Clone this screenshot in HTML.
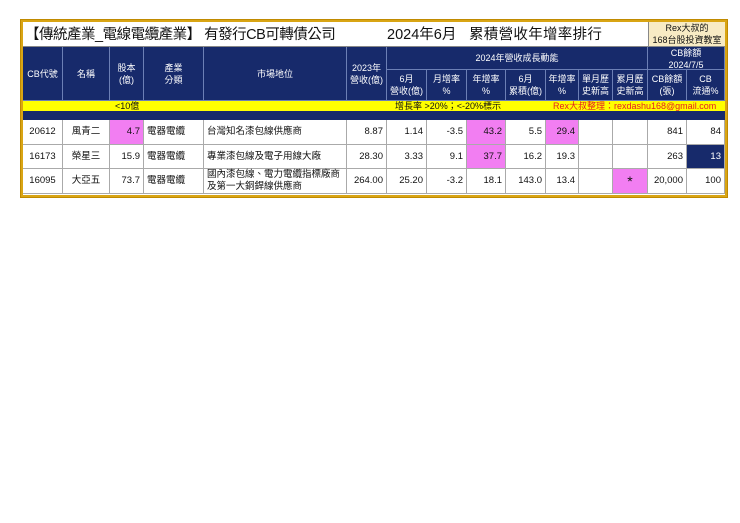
<!DOCTYPE html>
<html><head><meta charset="utf-8"><style>
*{margin:0;padding:0;box-sizing:border-box}
body{width:740px;height:523px;background:#fff;position:relative;font-family:"Liberation Sans","Noto Sans CJK TC",sans-serif;overflow:hidden}
.o{position:absolute;left:21px;top:20px;width:706px;height:177px;border:2px solid #d9a514;box-shadow:0 0 0 1px #c08a00}
.c{position:absolute;display:flex;align-items:center;justify-content:center;text-align:center;font-size:9.5px;line-height:12px;color:#111;white-space:nowrap}
.h{background:#172a6b;color:#fff;border-right:1px solid #6c7fb5;border-bottom:1px solid #6c7fb5;font-size:9px;line-height:12px}
.b{border-right:1px solid #aaa;border-bottom:1px solid #aaa}
.r{justify-content:flex-end;padding-right:3px}
.l{justify-content:flex-start;padding-left:3px;text-align:left}
.p{background:#f27ef2}
.n{background:#172a6b;color:#fff}
.t{position:absolute;top:23px;height:24px;line-height:24px;font-size:14.5px;color:#111;white-space:nowrap}
</style></head><body>
<div class="o"></div>
<div style="position:absolute;left:23px;top:46px;width:625px;height:1px;background:#888"></div>
<div class="t" style="left:25px;letter-spacing:-0.5px">【傳統產業_電線電纜產業】 有發行CB可轉債公司</div>
<div class="t" style="left:387px">2024年6月</div>
<div class="t" style="left:469px;letter-spacing:0.3px">累積營收年增率排行</div>
<div class="c" style="left:648px;top:22px;width:77px;height:25px;background:#f8ebc4;font-size:9px;border-left:1px solid #888;border-bottom:1px solid #888">Rex大叔的<br>168台股投資教室</div>

<div class="c h" style="left:23px;top:47px;width:40px;height:54px">CB代號</div>
<div class="c h" style="left:63px;top:47px;width:47px;height:54px">名稱</div>
<div class="c h" style="left:110px;top:47px;width:34px;height:54px">股本<br>(億)</div>
<div class="c h" style="left:144px;top:47px;width:60px;height:54px">產業<br>分類</div>
<div class="c h" style="left:204px;top:47px;width:143px;height:54px">市場地位</div>
<div class="c h" style="left:347px;top:47px;width:40px;height:54px">2023年<br>營收(億)</div>
<div class="c h" style="left:387px;top:47px;width:261px;height:23px">2024年營收成長動能</div>
<div class="c h" style="left:648px;top:47px;width:77px;height:23px;padding-top:2px">CB餘額<br>2024/7/5</div>
<div class="c h" style="left:387px;top:70px;width:40px;height:31px">6月<br>營收(億)</div>
<div class="c h" style="left:427px;top:70px;width:40px;height:31px">月增率<br>%</div>
<div class="c h" style="left:467px;top:70px;width:39px;height:31px">年增率<br>%</div>
<div class="c h" style="left:506px;top:70px;width:40px;height:31px">6月<br>累積(億)</div>
<div class="c h" style="left:546px;top:70px;width:33px;height:31px">年增率<br>%</div>
<div class="c h" style="left:579px;top:70px;width:34px;height:31px">單月歷<br>史新高</div>
<div class="c h" style="left:613px;top:70px;width:35px;height:31px">累月歷<br>史新高</div>
<div class="c h" style="left:648px;top:70px;width:39px;height:31px">CB餘額<br>(張)</div>
<div class="c h" style="left:687px;top:70px;width:38px;height:31px">CB<br>流通%</div>

<div style="position:absolute;left:23px;top:101px;width:702px;height:10px;background:#ffff00"></div>
<div class="c l" style="left:112px;top:100px;width:60px;height:12px;font-size:9px">&lt;10億</div>
<div class="c l" style="left:392px;top:100px;width:140px;height:12px;font-size:9px">增長率 &gt;20%；&lt;-20%標示</div>
<div class="c l" style="left:550px;top:100px;width:175px;height:12px;font-size:9px;color:#e52020">Rex大叔整理：rexdashu168@gmail.com</div>
<div style="position:absolute;left:23px;top:111px;width:702px;height:9px;background:#172a6b"></div>

<!-- row1 -->
<div class="c b" style="left:23px;top:120px;width:40px;height:25px">20612</div>
<div class="c b" style="left:63px;top:120px;width:47px;height:25px">風青二</div>
<div class="c b r p" style="left:110px;top:120px;width:34px;height:25px">4.7</div>
<div class="c b l" style="left:144px;top:120px;width:60px;height:25px">電器電纜</div>
<div class="c b l" style="left:204px;top:120px;width:143px;height:25px">台灣知名漆包線供應商</div>
<div class="c b r" style="left:347px;top:120px;width:40px;height:25px">8.87</div>
<div class="c b r" style="left:387px;top:120px;width:40px;height:25px">1.14</div>
<div class="c b r" style="left:427px;top:120px;width:40px;height:25px">-3.5</div>
<div class="c b r p" style="left:467px;top:120px;width:39px;height:25px">43.2</div>
<div class="c b r" style="left:506px;top:120px;width:40px;height:25px">5.5</div>
<div class="c b r p" style="left:546px;top:120px;width:33px;height:25px">29.4</div>
<div class="c b" style="left:579px;top:120px;width:34px;height:25px"></div>
<div class="c b" style="left:613px;top:120px;width:35px;height:25px"></div>
<div class="c b r" style="left:648px;top:120px;width:39px;height:25px">841</div>
<div class="c b r" style="left:687px;top:120px;width:38px;height:25px">84</div>
<!-- row2 -->
<div class="c b" style="left:23px;top:145px;width:40px;height:24px">16173</div>
<div class="c b" style="left:63px;top:145px;width:47px;height:24px">榮星三</div>
<div class="c b r" style="left:110px;top:145px;width:34px;height:24px">15.9</div>
<div class="c b l" style="left:144px;top:145px;width:60px;height:24px">電器電纜</div>
<div class="c b l" style="left:204px;top:145px;width:143px;height:24px">專業漆包線及電子用線大廠</div>
<div class="c b r" style="left:347px;top:145px;width:40px;height:24px">28.30</div>
<div class="c b r" style="left:387px;top:145px;width:40px;height:24px">3.33</div>
<div class="c b r" style="left:427px;top:145px;width:40px;height:24px">9.1</div>
<div class="c b r p" style="left:467px;top:145px;width:39px;height:24px">37.7</div>
<div class="c b r" style="left:506px;top:145px;width:40px;height:24px">16.2</div>
<div class="c b r" style="left:546px;top:145px;width:33px;height:24px">19.3</div>
<div class="c b" style="left:579px;top:145px;width:34px;height:24px"></div>
<div class="c b" style="left:613px;top:145px;width:35px;height:24px"></div>
<div class="c b r" style="left:648px;top:145px;width:39px;height:24px">263</div>
<div class="c b r n" style="left:687px;top:145px;width:38px;height:24px">13</div>
<!-- row3 -->
<div class="c b" style="left:23px;top:169px;width:40px;height:25px">16095</div>
<div class="c b" style="left:63px;top:169px;width:47px;height:25px">大亞五</div>
<div class="c b r" style="left:110px;top:169px;width:34px;height:25px">73.7</div>
<div class="c b l" style="left:144px;top:169px;width:60px;height:25px">電器電纜</div>
<div class="c b l" style="left:204px;top:169px;width:143px;height:25px;white-space:normal">國內漆包線、電力電纜指標廠商及第一大銅銲線供應商</div>
<div class="c b r" style="left:347px;top:169px;width:40px;height:25px">264.00</div>
<div class="c b r" style="left:387px;top:169px;width:40px;height:25px">25.20</div>
<div class="c b r" style="left:427px;top:169px;width:40px;height:25px">-3.2</div>
<div class="c b r" style="left:467px;top:169px;width:39px;height:25px">18.1</div>
<div class="c b r" style="left:506px;top:169px;width:40px;height:25px">143.0</div>
<div class="c b r" style="left:546px;top:169px;width:33px;height:25px">13.4</div>
<div class="c b" style="left:579px;top:169px;width:34px;height:25px"></div>
<div class="c b p" style="left:613px;top:169px;width:35px;height:25px;font-size:14px">*</div>
<div class="c b r" style="left:648px;top:169px;width:39px;height:25px">20,000</div>
<div class="c b r" style="left:687px;top:169px;width:38px;height:25px">100</div>
</body></html>
